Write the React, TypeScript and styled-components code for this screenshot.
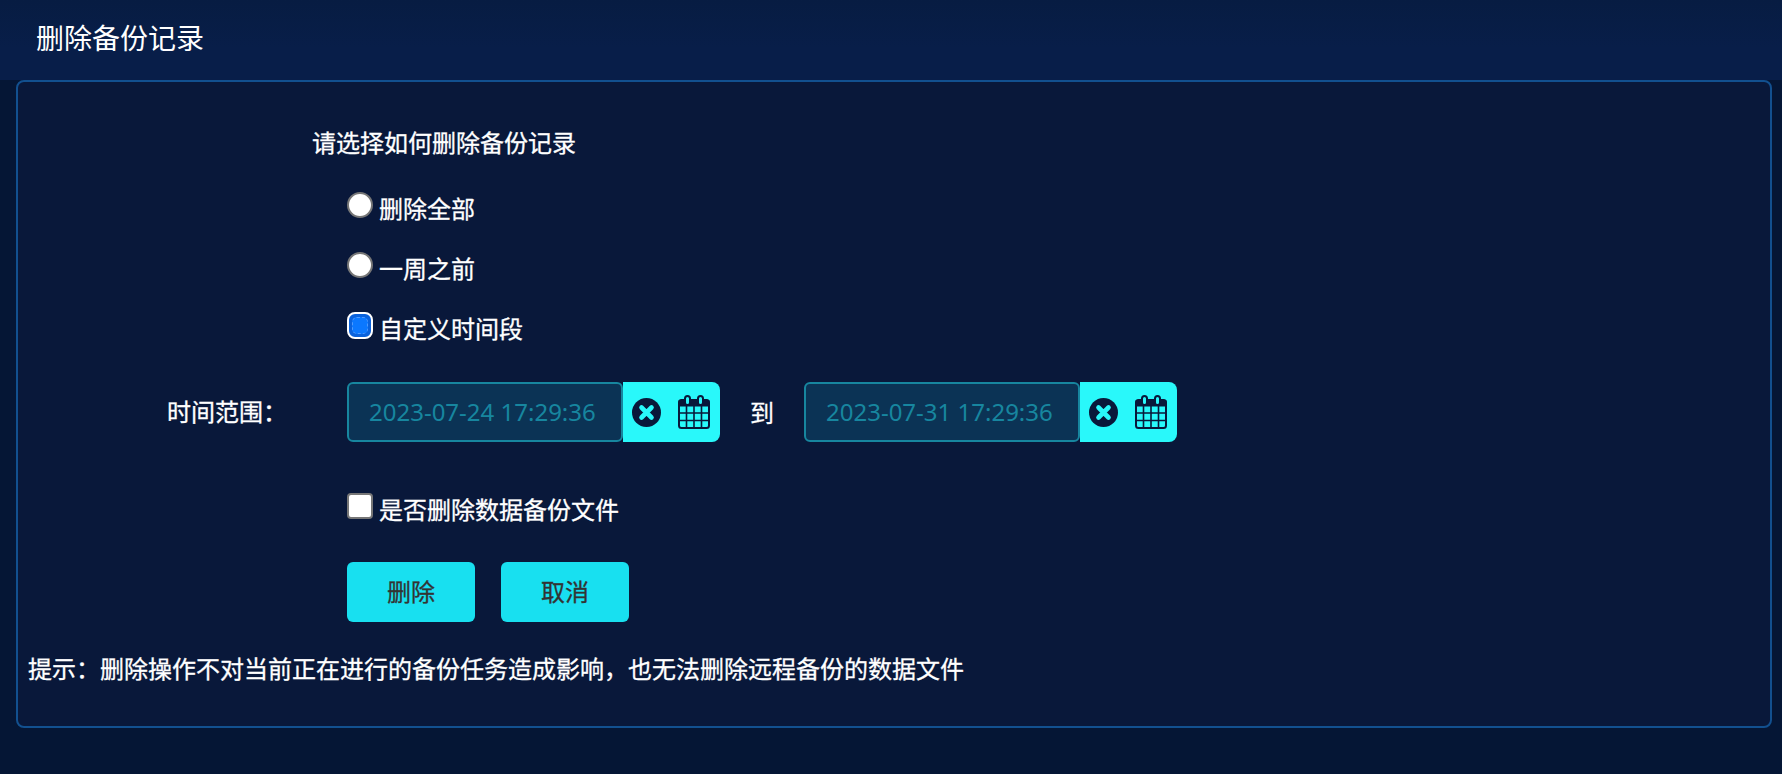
import React from "react";
import styled, { createGlobalStyle } from "styled-components";

const GlobalStyle = createGlobalStyle`
  html, body {
    margin: 0;
    padding: 0;
    background: #051635;
  }
  body {
    font-family: "Noto Sans", "Noto Sans CJK SC", sans-serif;
  }
`;

const Page = styled.div`
  width: 1782px;
  height: 774px;
  overflow: hidden;
  color: #fff;
  background: #051635;
`;

const Header = styled.header`
  height: 80px;
  padding-left: 36px;
  display: flex;
  align-items: center;
  padding-bottom: 5px;
  box-sizing: border-box;
  background: linear-gradient(180deg, #071c42 0%, #081e49 60%);
`;

const PageTitle = styled.h1`
  margin: 0;
  font-size: 28px;
  font-weight: 400;
  line-height: 40px;
`;

const Panel = styled.section`
  margin: 0 10px 0 16px;
  height: 648px;
  box-sizing: border-box;
  padding-top: 31px;
  background: #09183a;
  border: 2px solid #12508f;
  border-radius: 8px;
`;

const Row = styled.div`
  display: flex;
  align-items: center;
  height: 60px;
  padding-left: 329px;
  font-size: 24px;
  -webkit-text-stroke: 0.3px #fff;
`;

const Heading = styled(Row)`
  box-sizing: border-box;
  padding: 0 0 4px 294px;
  margin-bottom: 6px;
`;

const OptionLabel = styled.span`
  margin-left: 6px;
  margin-bottom: 3px;
`;

const Radio = styled.span`
  box-sizing: border-box;
  width: 26px;
  height: 26px;
  margin-top: -8px;
  border-radius: 50%;
  background: #fff;
  border: 2px solid #767676;
`;

const SelectedRadio = styled.span`
  box-sizing: border-box;
  width: 26px;
  height: 27px;
  margin-top: -8px;
  padding: 3px;
  border-radius: 8px;
  background: #0a62dc;
  border: 2px solid #fff;
  display: flex;
`;

const RadioDot = styled.span`
  flex: 1;
  border-radius: 5px;
  background: #0b78ff;
  border: 1px dashed #4f9bff;
`;

const CheckBox = styled.span`
  box-sizing: border-box;
  width: 26px;
  height: 26px;
  margin-top: -8px;
  border-radius: 4px;
  background: #fff;
  border: 2px solid #767676;
`;

const DateRow = styled(Row)`
  margin-top: 23px;
  padding-left: 149px;
`;

const RangeLabel = styled.span`
  width: 180px;
  margin-bottom: 4px;
`;

const DateField = styled.div`
  display: flex;
  height: 60px;
`;

const DateInput = styled.div`
  box-sizing: border-box;
  width: 276px;
  height: 60px;
  padding: 0 0 1px 20px;
  display: flex;
  align-items: center;
  font-size: 24px;
  -webkit-text-stroke: 0;
  color: #17869f;
  background: #0b3355;
  border: 2px solid #17869f;
  border-radius: 6px;
`;

const DateActions = styled.div`
  box-sizing: border-box;
  width: 97px;
  height: 60px;
  padding-left: 9px;
  display: flex;
  align-items: center;
  gap: 17px;
  background: #29f8fa;
  border-radius: 0 8px 8px 0;
`;

const Separator = styled.span`
  margin: 0 30px 2px;
  width: 24px;
`;

const CheckRow = styled(Row)`
  margin-top: 38px;
`;

const ButtonRow = styled(Row)`
  margin-top: 22px;
  gap: 26px;
`;

const ActionButton = styled.button`
  width: 128px;
  height: 60px;
  padding: 0 0 4px;
  border: none;
  border-radius: 6px;
  background: #18e0f0;
  color: #333;
  font-family: inherit;
  font-size: 24px;
  -webkit-text-stroke: 0.3px #333;
`;

const Tip = styled.p`
  margin: 18px 0 0;
  padding-left: 10px;
  height: 60px;
  line-height: 58px;
  font-size: 24px;
  -webkit-text-stroke: 0.3px #fff;
`;

const ClearIcon = () => (
  <svg width="29" height="29" viewBox="0 0 29 29">
    <circle cx="14.5" cy="14.5" r="14.5" fill="#09183a" />
    <path d="M9.5 9.5l10 10M19.5 9.5l-10 10" stroke="#29f8fa" strokeWidth="4.6" strokeLinecap="round" />
  </svg>
);

const CalendarIcon = () => (
  <svg width="32" height="34" viewBox="0 0 32 34" fill="none" stroke="#09183a">
    <rect x="1" y="5" width="30" height="28" rx="2.5" strokeWidth="2" />
    <path d="M1 5.5h30V11H1z" fill="#09183a" strokeWidth="1" />
    <rect x="7" y="1" width="5" height="9" rx="2.5" fill="#29f8fa" strokeWidth="2" />
    <rect x="20" y="1" width="5" height="9" rx="2.5" fill="#29f8fa" strokeWidth="2" />
    <path d="M1 18h30M1 25.5h30M8.5 11v21M16 11v21M23.5 11v21" strokeWidth="1.6" />
  </svg>
);

const DatePicker: React.FC<{ value: string }> = ({ value }) => (
  <DateField>
    <DateInput>{value}</DateInput>
    <DateActions>
      <ClearIcon />
      <CalendarIcon />
    </DateActions>
  </DateField>
);

const App: React.FC = () => (
  <Page>
    <GlobalStyle />
    <Header>
      <PageTitle>删除备份记录</PageTitle>
    </Header>
    <Panel>
      <Heading>请选择如何删除备份记录</Heading>
      <Row>
        <Radio />
        <OptionLabel>删除全部</OptionLabel>
      </Row>
      <Row>
        <Radio />
        <OptionLabel>一周之前</OptionLabel>
      </Row>
      <Row>
        <SelectedRadio>
          <RadioDot />
        </SelectedRadio>
        <OptionLabel>自定义时间段</OptionLabel>
      </Row>
      <DateRow>
        <RangeLabel>{"时间范围\uFF1A"}</RangeLabel>
        <DatePicker value="2023-07-24 17:29:36" />
        <Separator>到</Separator>
        <DatePicker value="2023-07-31 17:29:36" />
      </DateRow>
      <CheckRow>
        <CheckBox />
        <OptionLabel>是否删除数据备份文件</OptionLabel>
      </CheckRow>
      <ButtonRow>
        <ActionButton>删除</ActionButton>
        <ActionButton>取消</ActionButton>
      </ButtonRow>
      <Tip>{"提示\uFF1A删除操作不对当前正在进行的备份任务造成影响\uFF0C也无法删除远程备份的数据文件"}</Tip>
    </Panel>
  </Page>
);

export default App;
